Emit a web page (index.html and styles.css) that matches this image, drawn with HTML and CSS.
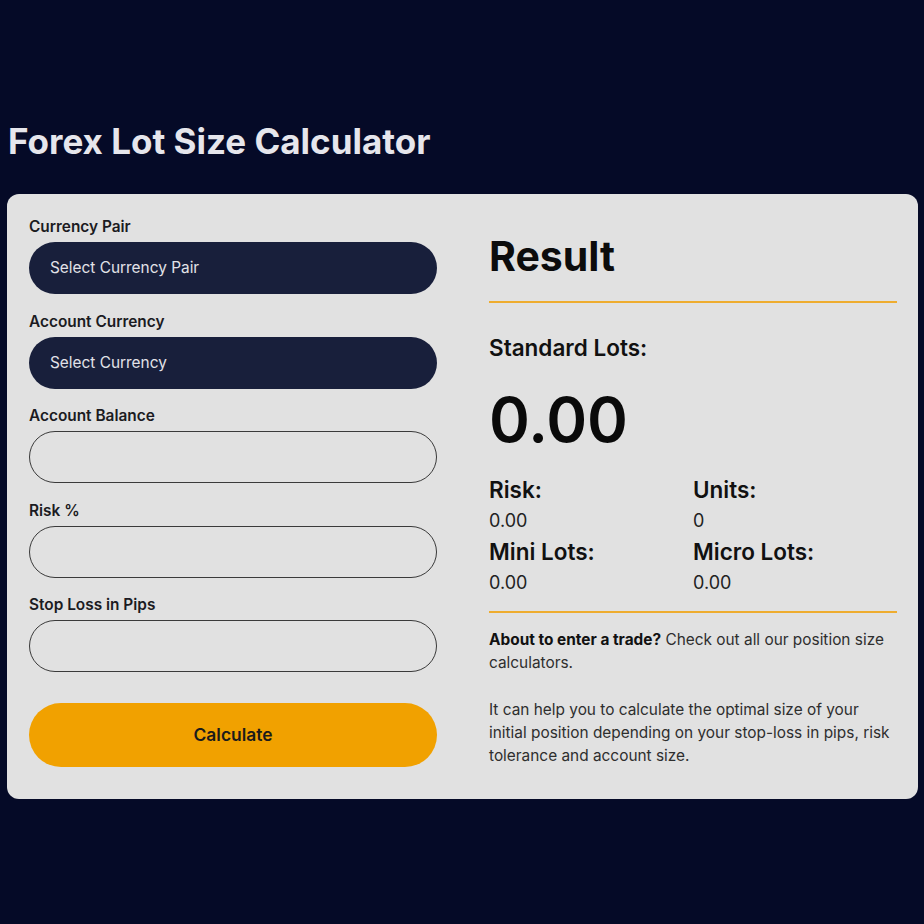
FILE: index.html
```html
<!DOCTYPE html>
<html lang="en">
<head>
  <meta charset="UTF-8">
  <meta name="viewport" content="width=device-width, initial-scale=1.0">
  <title>Forex Lot Size Calculator</title>
  <link rel="stylesheet" href="styles.css">
</head>
<body>
  <div class="wrapper">
    <h1 class="title">Forex Lot Size Calculator</h1>

    <div class="calculator">
      <div class="left">
        <label class="field-label">Currency Pair</label>
        <div class="select">Select Currency Pair</div>

        <label class="field-label">Account Currency</label>
        <div class="select">Select Currency</div>

        <label class="field-label">Account Balance</label>
        <input type="text" class="field">

        <label class="field-label">Risk %</label>
        <input type="text" class="field">

        <label class="field-label">Stop Loss in Pips</label>
        <input type="text" class="field">

        <button class="btn">Calculate</button>
      </div>

      <div class="right">
        <h2>Result</h2>
        <div class="divider"></div>
        <h3 class="std-label">Standard Lots:</h3>
        <div class="big">0.00</div>

        <div class="stats">
          <div>
            <h4>Risk:</h4>
            <p>0.00</p>
          </div>
          <div>
            <h4>Units:</h4>
            <p>0</p>
          </div>
          <div>
            <h4>Mini Lots:</h4>
            <p>0.00</p>
          </div>
          <div>
            <h4>Micro Lots:</h4>
            <p>0.00</p>
          </div>
        </div>

        <div class="divider second"></div>
        <p class="info"><strong>About to enter a trade?</strong> Check out all our position size calculators.</p>
        <p class="info">It can help you to calculate the optimal size of your initial position depending on your stop-loss in pips, risk tolerance and account size.</p>
      </div>
    </div>
  </div>
</body>
</html>
```

FILE: styles.css
```css
body {
  margin: 0;
  padding: 0;
  font-family: Inter, 'Noto Sans', sans-serif;
  background: #050a27;
  color: #111;
}
.wrapper {
  width: 911px;
  padding: 119px 0 0 7px;
}
.title {
  margin: 0 0 0 1px;
  font-size: 35px;
  line-height: 44px;
  font-weight: 700;
  color: #e6e6ec;
}
.calculator {
  margin-top: 31px;
  background: #e1e1e1;
  border-radius: 12px;
  display: flex;
  gap: 52px;
  padding: 24px 21px 32px 22px;
}
.left, .right {
  flex: 1;
  min-width: 0;
}
.left {
  display: flex;
  flex-direction: column;
}
.field-label {
  font-size: 15.4px;
  line-height: 18px;
  font-weight: 600;
  color: #1b1b22;
  margin-bottom: 6px;
}
.select, .field {
  box-sizing: border-box;
  height: 52px;
  border-radius: 26px;
  margin-bottom: 18.5px;
  width: 100%;
}
.select {
  background: #181f3b;
  color: #e2e2e8;
  font-size: 15.4px;
  line-height: 52px;
  padding: 0 21px;
}
.field {
  background: transparent;
  border: 1px solid #3a3a3a;
  font-family: inherit;
  font-size: 15px;
  padding: 0 20px;
  outline: none;
}
.btn {
  margin-top: 12px;
  height: 64px;
  border: none;
  border-radius: 32px;
  background: #f1a100;
  color: #1b1b1b;
  font-family: inherit;
  font-size: 17.4px;
  font-weight: 600;
  cursor: pointer;
}
.right h2 {
  margin: 14px 0 0;
  font-size: 41px;
  line-height: 48px;
  font-weight: 700;
  color: #0c0c0c;
}
.divider {
  height: 2px;
  background: #eeac2f;
  margin-top: 21px;
}
.std-label {
  margin: 32px 0 0;
  font-size: 22.5px;
  line-height: 26px;
  font-weight: 600;
  color: #111;
}
.big {
  margin-top: 23px;
  font-size: 62px;
  line-height: 72px;
  font-weight: 600;
  color: #0a0a0a;
}
.stats {
  margin-top: 21px;
  display: grid;
  grid-template-columns: 1fr 1fr;
  row-gap: 6px;
}
.stats h4 {
  margin: 0;
  font-size: 22.5px;
  line-height: 26px;
  font-weight: 600;
  color: #111;
}
.stats p {
  margin: 6px 0 0;
  font-size: 18px;
  line-height: 24px;
  color: #222;
}
.divider.second {
  margin-top: 16px;
}
.info {
  margin: 15px 0 0;
  font-size: 15.4px;
  line-height: 23px;
  color: #2e2e2e;
}
.info + .info {
  margin-top: 24px;
}
.info strong {
  color: #111;
}
```
